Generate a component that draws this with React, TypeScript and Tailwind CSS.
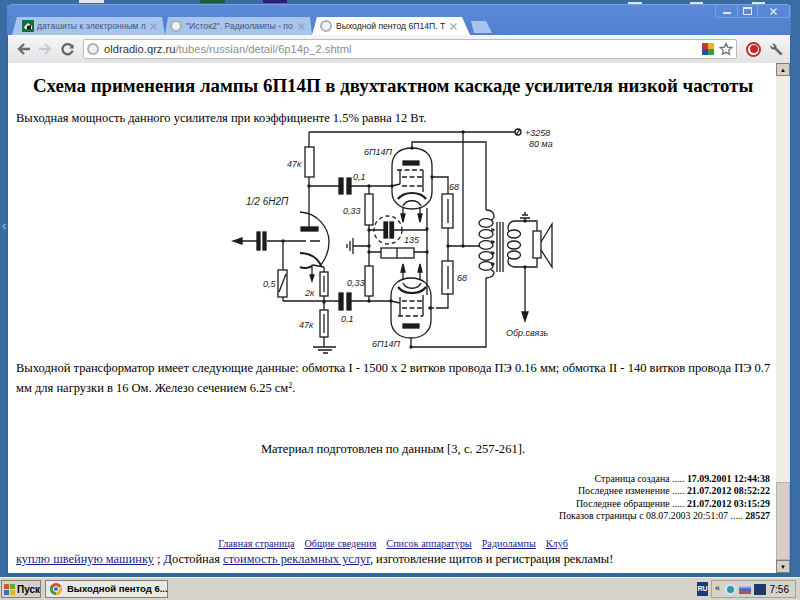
const serif = { fontFamily: '"Liberation Serif", serif' };

function Dot({ x, y }: { x: number; y: number }) {
  return <circle cx={x} cy={y} r="1.7" fill="#1c1c1c" stroke="none" />;
}

function Schematic() {
  return (
    <svg width="340" height="233" viewBox="220 125 340 233" fill="none" stroke="#1c1c1c" strokeWidth="1.3" className="overflow-visible">
      {/* anode supply and driver stage */}
      <path d="M309 132H515M309 132V147M309 177V227M309 186H339M351 186H392" />
      <rect x="305" y="147" width="9" height="30" />
      <rect x="339" y="178" width="4" height="16" fill="#1c1c1c" />
      <rect x="347" y="178" width="4" height="16" fill="#1c1c1c" />
      <path d="M369 186V194M369 225V266M369 296V301M369 230H385" />
      <rect x="365" y="194" width="8" height="31" />
      <rect x="365" y="266" width="8" height="30" />
      <path d="M283 301H339M351 301H391M283 241V270M283 297V301M324 267V272M324 296V310M324 337V347" />
      <rect x="278" y="270" width="9" height="27" />
      <path d="M286 274L279 292" />
      <rect x="320" y="272" width="8" height="24" />
      <path d="M324 276V292" />
      <rect x="320" y="310" width="8" height="27" />
      <path d="M324 314V333" />
      <rect x="339" y="293" width="4" height="17" fill="#1c1c1c" />
      <rect x="347" y="293" width="4" height="17" fill="#1c1c1c" />
      <path d="M240 241H257M267 241H306M310 241H320" />
      <path d="M233 241L242 238V244Z" fill="#1c1c1c" />
      <rect x="257" y="232" width="3" height="18" fill="#1c1c1c" />
      <rect x="263" y="232" width="3" height="18" fill="#1c1c1c" />
      <path d="M300 212C318 213 329 228 329 242C329 252 325 260 320 266" />
      <rect x="301" y="227" width="17" height="4" fill="#1c1c1c" />
      <path d="M300 253C310 253 318 258 321 266M300 267C304 269 310 268 313 265" strokeWidth="2" />
      <path d="M313 265L324 267M312 267V279" />
      <path d="M312 281L310 275H314Z" fill="#1c1c1c" />
      <path d="M313 347H336M318 350H332M323 353H328" />
      <Dot x={309} y={186} />
      <Dot x={369} y={186} />
      <Dot x={283} y={241} />
      <Dot x={324} y={302} />
      <Dot x={369} y={301} />
      <Dot x={369} y={246} />
      <Dot x={369} y={252} />
      <Dot x={369} y={230} />

      {/* top output tube */}
      <path d="M392 166C392 154 400 148 412 148C424 148 432 154 432 166V192C432 202 424 209 412 209C400 209 392 202 392 192Z" />
      <rect x="403" y="161" width="16" height="4" fill="#1c1c1c" />
      <path d="M397 170H423M402 177H423M402 186H422" strokeDasharray="5 2.5" />
      <path d="M400 170V184M423 170V192M392 186L400 184" />
      <path d="M398 199C404 191 420 191 426 199" strokeWidth="2.2" />
      <path d="M403 206C406 199 418 199 421 206" strokeWidth="1.4" />
      <path d="M403 207V222M420 207V222" />
      <path d="M403 222L401 214H405ZM420 222L418 214H422Z" fill="#1c1c1c" />
      <path d="M412 148V142H486V210" />
      <Dot x={412} y={148} />
      <Dot x={392} y={186} />
      <Dot x={432} y={177} />

      {/* bottom output tube */}
      <path d="M391 296C391 285 399 278 411 278C423 278 431 285 431 296V320C431 331 423 338 411 338C399 338 391 331 391 320Z" />
      <rect x="403" y="324" width="16" height="4" fill="#1c1c1c" />
      <path d="M398 316H423M402 308H423M402 301H422" strokeDasharray="5 2.5" />
      <path d="M400 297V316M423 295V316M391 301L400 303" />
      <path d="M398 287C404 295 420 295 426 287" strokeWidth="2.2" />
      <path d="M403 283C406 290 418 290 421 283" strokeWidth="1.4" />
      <path d="M403 265V280M420 265V280" />
      <path d="M403 264L401 272H405ZM420 264L418 272H422Z" fill="#1c1c1c" />
      <path d="M411 338V347H486V278" />
      <Dot x={411} y={347} />
      <Dot x={391} y={301} />
      <Dot x={430} y={308} />

      {/* cathode network and screen resistors */}
      <path d="M432 177H448V194M448 228V261M448 293V308H440" />
      <path d="M440 308H430" strokeDasharray="4 2" />
      <rect x="442" y="194" width="11" height="34" />
      <path d="M448 199V223" />
      <rect x="442" y="261" width="11" height="33" />
      <path d="M448 266V289" />
      <path d="M448 246H480M463 132V246M427 208V295M369 252H381M414 252H427" />
      <rect x="381" y="248" width="33" height="10" />
      <path d="M397 248V258" />
      <circle cx="388" cy="230" r="14" strokeDasharray="4 3" />
      <rect x="384" y="222" width="3.5" height="16" fill="#1c1c1c" />
      <rect x="390" y="222" width="3.5" height="16" fill="#1c1c1c" />
      <path d="M393 230H427" />
      <path d="M353 246H369M353 238V254M350 241V251M347 244V248" />
      <Dot x={463} y={132} />
      <Dot x={463} y={246} />
      <Dot x={448} y={246} />
      <Dot x={427} y={229} />
      <Dot x={427} y={252} />

      {/* output transformer */}
      <path d="M486 210C495 210 496 219 491 220M491 229C495 229 495 231 491 231M491 241C495 241 495 243 491 243M491 252C495 252 495 254 491 254M491 263C495 263 495 265 491 265M491 270C496 271 495 277 486 278" />
      <ellipse cx="486" cy="223" rx="7" ry="4.3" />
      <ellipse cx="486" cy="234" rx="7" ry="4.3" />
      <ellipse cx="486" cy="245" rx="7" ry="4.3" />
      <ellipse cx="486" cy="256" rx="7" ry="4.3" />
      <ellipse cx="486" cy="266" rx="7" ry="4.3" />
      <path d="M497 222V272M500 222V272M503 222V272" />
      <ellipse cx="514" cy="234" rx="6.5" ry="4" />
      <ellipse cx="514" cy="245" rx="6.5" ry="4" />
      <ellipse cx="514" cy="255" rx="6.5" ry="4" />
      <path d="M514 221H537V231M537 258V267H514M514 221C508 222 507 228 509 231M514 267C508 266 507 262 509 258" />
      <rect x="533" y="231" width="8" height="27" />
      <path d="M541 242L552 224V267L541 250" />
      <path d="M525 267V318" />
      <path d="M525 321L522 312H528Z" fill="#1c1c1c" />
      <path d="M525 218V221M520 218H530M522 215H528M524 213H526" />
      <Dot x={525} y={221} />
      <Dot x={525} y={267} />
      <circle cx="518" cy="132" r="3" />
      <path d="M516 135L520 129" />

      <g fill="#1c1c1c" stroke="none" fontFamily="Liberation Sans, sans-serif" fontStyle="italic" fontSize="9">
        <text x="287" y="167">47к</text>
        <text x="364" y="155">6П14П</text>
        <text x="353" y="180">0,1</text>
        <text x="246" y="205" fontSize="10">1/2 6Н2П</text>
        <text x="343" y="214">0,33</text>
        <text x="263" y="287">0,5</text>
        <text x="305" y="296">2к</text>
        <text x="347" y="286">0,33</text>
        <text x="341" y="322">0,1</text>
        <text x="299" y="328">47к</text>
        <text x="372" y="347">6П14П</text>
        <text x="449" y="190">68</text>
        <text x="457" y="281">68</text>
        <text x="404" y="243">135</text>
        <text x="525" y="136">+3258</text>
        <text x="529" y="147">80 ма</text>
        <text x="506" y="336">Обр.связь</text>
      </g>
    </svg>
  );
}

function Globe() {
  return <span className="w-[12px] h-[12px] rounded-full border-2 border-[#a9b0b8] bg-[#eef0f3] shrink-0" />;
}

function CloseX({ className }: { className: string }) {
  return (
    <svg width="7" height="7" viewBox="0 0 7 7" stroke="currentColor" strokeWidth="1.4" className={`shrink-0 ${className}`}>
      <path d="M0.5 0.5L6.5 6.5M6.5 0.5L0.5 6.5" />
    </svg>
  );
}

function Stat({ label, value }: { label: string; value: string }) {
  return (
    <div>
      {label} ..... <b>{value}</b>
    </div>
  );
}

export default function App() {
  return (
    <div className="relative w-[800px] h-[600px] overflow-hidden flex flex-col bg-[#3a6ca4]" style={{ fontFamily: '"Liberation Sans", sans-serif' }}>
      {/* bits of desktop icon labels above the window */}
      <span className="absolute left-[79px] top-0 w-[25px] h-[3px] bg-[#dfe6ee]" />
      <span className="absolute left-[200px] top-0 w-[25px] h-[3px] bg-[#1f5a3c]" />
      <span className="absolute left-[263px] top-0 w-[24px] h-[3px] bg-[#25207a]" />
      <span className="absolute left-[628px] top-[2px] w-[14px] h-[2px] bg-[#dfe6d8]" />
      <span className="absolute left-[690px] top-[2px] w-[13px] h-[2px] bg-[#dfe6d8]" />
      <span className="absolute left-[752px] top-[2px] w-[13px] h-[2px] bg-[#dfe6d8]" />
      <span className="absolute left-[2px] top-[219px] text-[12px] leading-[14px] text-[#a9c2e0]">‹</span>

      <div className="flex-1 min-h-0 flex flex-col pt-[4px] pl-[7px] pr-[9px]">
        {/* window frame */}
        <div className="flex-1 min-h-0 flex flex-col bg-[#35659f] rounded-t-[5px] border-t border-[#7ba0dd]">
          <div className="h-[30px] shrink-0 relative flex items-end pl-[5px] bg-gradient-to-b from-[#5b8ad8] to-[#4f7fce]">
            <div className="flex items-center w-[153px] h-[18px] pl-[10px] pr-[8px] gap-[3px] bg-[#a7c4ed] text-[#46587a] [clip-path:polygon(5px_0,calc(100%-3px)_0,100%_100%,0_100%)]">
              <svg width="12" height="12" viewBox="0 0 12 12" className="shrink-0">
                <rect width="12" height="12" fill="#14703c" />
                <path d="M2 7L6 3L10 6V9H3Z" fill="#e8efe8" />
                <path d="M5 6L9 5V9H5Z" fill="#1a1a1a" />
              </svg>
              <span className="flex-1 whitespace-nowrap overflow-hidden text-[8.6px] leading-[11px]">даташиты к электронным л</span>
              <CloseX className="text-[#8ea2bd]" />
            </div>
            <div className="flex items-center w-[147px] h-[18px] pl-[5px] pr-[7px] gap-[4px] bg-[#a7c4ed] text-[#46587a] [clip-path:polygon(3px_0,calc(100%-2px)_0,100%_100%,0_100%)]">
              <Globe />
              <span className="flex-1 whitespace-nowrap overflow-hidden text-[8.6px] leading-[11px]">"Исток2". Радиолампы - по</span>
              <CloseX className="text-[#8ea2bd]" />
            </div>
            <div className="flex items-center w-[158px] h-[18px] pl-[8px] pr-[13px] gap-[4px] bg-white text-[#222] [clip-path:polygon(5px_0,calc(100%-8px)_0,100%_100%,0_100%)]">
              <Globe />
              <span className="flex-1 whitespace-nowrap overflow-hidden text-[8.6px] leading-[11px]">Выходной пентод 6П14П. Т</span>
              <CloseX className="text-[#a9adb3]" />
            </div>
            <div className="w-[24px] h-[12px] mb-[2px] ml-[-2px] bg-[#a7c4ed] [clip-path:polygon(3px_0,calc(100%-6px)_0,100%_100%,6px_100%)]" />
            <div className="absolute right-[1px] top-0 h-[13px] flex rounded-b-[3px] border border-t-0 border-[#7ba0dd] text-[#dfe8f6]">
              <div className="w-[22px] flex items-center justify-center border-r border-[#7ba0dd]">
                <span className="w-[8px] h-[2px] mt-[4px] bg-[#dfe8f6]" />
              </div>
              <div className="w-[20px] flex items-center justify-center border-r border-[#7ba0dd]">
                <span className="w-[9px] h-[8px] border border-t-2 border-[#dfe8f6]" />
              </div>
              <div className="w-[31px] flex items-center justify-center">
                <CloseX className="text-[#e6edf8]" />
              </div>
            </div>
          </div>
          <div className="h-[28px] shrink-0 flex items-center gap-[9px] pl-[9px] pr-[7px] bg-gradient-to-b from-[#f5f6f7] to-[#e2e3e5] mx-[1px]">
            <svg width="13" height="12" viewBox="0 0 13 12" fill="none" stroke="#6d6d6d" strokeWidth="2.4">
              <path d="M13 6H3M7 1L2 6L7 11" />
            </svg>
            <svg width="13" height="12" viewBox="0 0 13 12" fill="none" stroke="#c9cbce" strokeWidth="2.4">
              <path d="M0 6H10M6 1L11 6L6 11" />
            </svg>
            <svg width="13" height="13" viewBox="0 0 14 14" fill="none" stroke="#666" strokeWidth="2.4">
              <path d="M12 4A5.5 5.5 0 1 0 12.5 8" />
              <path d="M13.5 1V6H8.5Z" fill="#666" stroke="none" />
            </svg>
            <div className="flex-1 h-[20px] flex items-center gap-[5px] pl-[3px] pr-[3px] bg-white border border-[#c3b9b3] rounded-[2px]">
              <Globe />
              <span className="flex-1 text-[11.2px] whitespace-nowrap text-[#8d8d8d]">
                <span className="text-[#333]">oldradio.qrz.ru</span>/tubes/russian/detail/6p14p_2.shtml
              </span>
              <svg width="12" height="12" viewBox="0 0 12 12">
                <rect width="6" height="6" fill="#c43a2a" />
                <rect x="6" width="6" height="6" fill="#e2b81d" />
                <rect y="6" width="6" height="6" fill="#2a4fa8" />
                <rect x="6" y="6" width="6" height="6" fill="#3a9c3f" />
              </svg>
              <svg width="14" height="14" viewBox="0 0 24 24" fill="#fff" stroke="#6b7078" strokeWidth="2.2">
                <path d="M12 2.5l2.9 6.3 6.8.8-5 4.7 1.3 6.8-6-3.4-6 3.4 1.3-6.8-5-4.7 6.8-.8z" />
              </svg>
            </div>
            <span className="w-[15px] h-[15px] rounded-full border-2 border-[#c22a2a] bg-white flex items-center justify-center">
              <span className="w-[8px] h-[8px] rounded-full bg-[#c22a2a]" />
            </span>
            <svg width="13" height="13" viewBox="0 0 14 14" fill="#666" stroke="#666" strokeWidth="1">
              <path d="M13 11.5L6.5 5C7 3 5.5 0.8 3 1L5 3.2L4 5L1.8 5.2L0.8 3C0.5 5.5 2.8 7.2 5 6.5L11.5 13Z" />
            </svg>
          </div>
          <div className="flex-1 min-h-0 flex mx-[1px] mb-[4px]">
            <main className="flex-1 min-w-0 bg-white text-black overflow-hidden pl-[8px] pr-[6px]" style={serif}>
              <h1 className="mt-[12px] text-center text-[18.85px] leading-[22px] font-bold whitespace-nowrap">
                Схема применения лампы 6П14П в двухтактном каскаде усилителя низкой частоты
              </h1>
              <p className="mt-[14px] text-[12.45px] leading-[14px] whitespace-nowrap">
                Выходная мощность данного усилителя при коэффициенте 1.5% равна 12 Вт.
              </p>
              <div className="h-[233px] pl-[204px]">
                <Schematic />
              </div>
              <p className="mr-[-4px] text-[12.5px] leading-[20px]">
                Выходной трансформатор имеет следующие данные: обмотка I - 1500 х 2 витков провода ПЭ 0.16 мм; обмотка II - 140 витков провода ПЭ 0.7 мм для нагрузки в 16 Ом. Железо сечением 6.25 см
                <sup className="text-[8px] leading-none">2</sup>.
              </p>
              <p className="mt-[44px] text-center text-[12.6px] leading-[15px]">
                Материал подготовлен по данным [3, с. 257-261].
              </p>
              <div className="mt-[16px] text-right text-[9.9px] leading-[12.4px]">
                <Stat label="Страница создана" value="17.09.2001 12:44:38" />
                <Stat label="Последнее изменение" value="21.07.2012 08:52:22" />
                <Stat label="Последнее обращение" value="21.07.2012 03:15:29" />
                <div>
                  Показов страницы с 08.07.2003 20:51:07 ..... <b>28527</b>
                </div>
              </div>
              <div className="mt-[15px] flex justify-center gap-[10px] text-[10.2px] leading-[12px] text-[#1a1a8c] underline">
                <span>Главная страница</span>
                <span>Общие сведения</span>
                <span>Список аппаратуры</span>
                <span>Радиолампы</span>
                <span>Клуб</span>
              </div>
              <p className="text-[12.4px] leading-[15px] mt-[2px] whitespace-nowrap">
                <span className="text-[#1a1a8c] underline">куплю швейную машинку</span> ; Достойная{' '}
                <span className="text-[#1a1a8c] underline">стоимость рекламных услуг</span>, изготовление щитов и регистрация рекламы!
              </p>
            </main>
            <div className="w-[14px] shrink-0 flex flex-col bg-[#eeede5]">
              <div className="h-[13px] bg-[#d4d0c8] border border-[#808080] flex items-center justify-center text-[6px] leading-none text-black">▲</div>
              <div className="flex-1" />
              <div className="h-[78px] bg-[#d4d0c8] border border-[#b5b1a8]" />
              <div className="h-[13px] bg-[#d4d0c8] border border-[#808080] flex items-center justify-center text-[6px] leading-none text-black">▼</div>
            </div>
          </div>
        </div>
      </div>
      {/* taskbar */}
      <div className="h-[23px] shrink-0 flex items-center bg-[#d6d3cb] border-t border-[#f2f1ec] pl-[1px] pr-[4px] text-black">
        <div className="h-[18px] w-[40px] flex items-center gap-[2px] pl-[2px] border border-[#808080] text-[10px] font-bold">
          <svg width="11" height="11" viewBox="0 0 11 11" className="shrink-0">
            <rect width="5" height="5" fill="#d9562a" />
            <rect x="6" width="5" height="5" fill="#6aa83a" />
            <rect y="6" width="5" height="5" fill="#3d6fc4" />
            <rect x="6" y="6" width="5" height="5" fill="#e6b81f" />
          </svg>
          Пуск
        </div>
        <div className="ml-[4px] h-[18px] w-[123px] flex items-center gap-[5px] pl-[4px] border border-[#808080] bg-[#ebe9e3] text-[9.5px] font-bold whitespace-nowrap">
          <svg width="12" height="12" viewBox="0 0 12 12" className="shrink-0">
            <circle cx="6" cy="6" r="6" fill="#d94a38" />
            <path d="M6 6L11.2 3A6 6 0 0 1 6 12Z" fill="#e8bd2a" />
            <path d="M6 6V12A6 6 0 0 1 0.8 3Z" fill="#3f9c4a" />
            <circle cx="6" cy="6" r="2.6" fill="#3d74c9" stroke="#fff" />
          </svg>
          Выходной пентод 6...
        </div>
        <div className="flex-1" />
        <span className="w-[11px] h-[14px] bg-[#1f3a78] text-white text-[7px] leading-[14px] text-center font-bold">RU</span>
        <div className="ml-[3px] h-[18px] w-[85px] flex items-center gap-[3px] pl-[3px] border border-[#a5a29a] text-[10px]">
          <span className="text-[9px] w-[7px]">«</span>
          <span className="w-[11px] h-[11px] rounded-full bg-[#2f9aa8] border-2 border-[#cfe6ee]" />
          <span className="w-[12px] h-[9px] bg-gradient-to-b from-[#e8e8f0] via-[#3f5fc0] to-[#d23a3a]" />
          <span className="w-[12px] h-[11px] bg-[#1f3a6a]" />
          <span className="ml-auto mr-[6px]">7:56</span>
        </div>
      </div>
    </div>
  );
}
